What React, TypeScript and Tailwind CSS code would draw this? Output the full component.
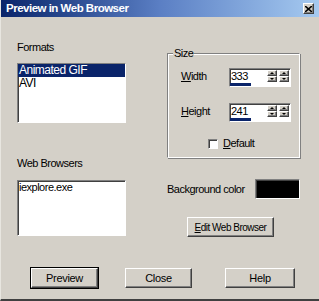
import React from "react";

const font = { fontFamily: '"Liberation Sans", Arial, sans-serif' };

const raised =
  "border border-t-white border-l-white border-r-[#404040] border-b-[#404040] shadow-[inset_-1px_-1px_0_#808080]";
const sunken =
  "border border-t-[#808080] border-l-[#808080] border-r-white border-b-white shadow-[inset_1px_1px_0_#404040]";

function Button({ label, w, def = false, className = "" }: { label: React.ReactNode; w: string; def?: boolean; className?: string }) {
  return (
    <div className={`${w} h-[20px] ${def ? "ring-1 ring-black" : ""} ${className}`}>
      <div className={`h-full w-full ${raised} bg-[#d4d0c8] flex items-center justify-center text-[11px] text-black whitespace-nowrap`}>
        {label}
      </div>
    </div>
  );
}

function Spin({ value }: { value: string }) {
  return (
    <div className={`w-[62px] h-[19px] ${sunken} bg-white flex flex-col`}>
      <div className="flex h-[14px] items-center">
        <span className="flex-1 pl-[1px] text-[11px] leading-none text-black">{value}</span>
        <div className="flex gap-[2px] pr-[1px]">
          {[0, 1].map((i) => (
            <div key={i} className="flex flex-col w-[10px]">
              <div className={`h-[6px] ${raised} bg-[#d4d0c8] flex items-center justify-center`}>
                <div className="w-0 h-0 border-l-[2px] border-r-[2px] border-b-[2px] border-l-transparent border-r-transparent border-b-black" />
              </div>
              <div className={`h-[6px] ${raised} bg-[#d4d0c8] flex items-center justify-center`}>
                <div className="w-0 h-0 border-l-[2px] border-r-[2px] border-t-[2px] border-l-transparent border-r-transparent border-t-black" />
              </div>
            </div>
          ))}
        </div>
      </div>
      <div className="h-[3px] flex">
        <div className="w-[21px] bg-[#0a246a]" />
      </div>
    </div>
  );
}

export default function App() {
  return (
    <div style={font} className="w-[319px] h-[301px] bg-[#d4d0c8] flex flex-col border-l border-l-[#e8e6e0] border-b-2 border-b-[#404040] overflow-hidden">
      {/* Title bar */}
      <div className="h-[17px] flex items-center justify-between bg-gradient-to-r from-[#0a246a] via-[#5b7fc4] to-[#a6caf0] pl-[5px] pr-[5px]">
        <span className="text-white font-bold text-[11.5px] tracking-[-0.5px] leading-none">
          Preview in Web Browser
        </span>
        <div className={`w-[11px] h-[11px] ${raised} bg-[#d4d0c8] flex items-center justify-center`}>
          <svg width="7" height="6" viewBox="0 0 7 6">
            <path d="M0 0 L7 6 M7 0 L0 6" stroke="black" strokeWidth="1.6" />
          </svg>
        </div>
      </div>

      {/* Body */}
      <div className="flex text-[11px] tracking-[-0.5px] text-black">
        {/* Left column */}
        <div className="ml-[16px] w-[109px] flex flex-col">
          <div className="mt-[24px] leading-[13px]">Formats</div>
          <div className={`mt-[9px] h-[60px] ${sunken} bg-white`}>
            <div className="bg-[#0a246a] text-white leading-[13px] pl-[1px] text-[12px]">Animated GIF</div>
            <div className="leading-[13px] pl-[1px] text-[12px]">AVI</div>
          </div>
          <div className="mt-[34px] leading-[13px]">Web Browsers</div>
          <div className={`mt-[10px] h-[56px] ${sunken} bg-white`}>
            <div className="leading-[13px] pl-[1px]">iexplore.exe</div>
          </div>
        </div>

        {/* Right column */}
        <div className="ml-[41px] w-[133px] flex flex-col">
          <div className="mt-[36px] h-[105px] border border-t-[#808080] border-l-[#808080] border-r-white border-b-white shadow-[inset_1px_1px_0_white,1px_1px_0_#808080] relative">
            <span className="absolute -top-[7px] left-[5px] bg-[#d4d0c8] px-[1px] leading-[13px]">Size</span>
            <div className="mt-[14px] flex items-start">
              <span className="ml-[13px] w-[48px] mt-[2px] leading-[13px]"><u>W</u>idth</span>
              <Spin value="333" />
            </div>
            <div className="mt-[16px] flex items-start">
              <span className="ml-[13px] w-[48px] mt-[2px] leading-[13px]"><u>H</u>eight</span>
              <Spin value="241" />
            </div>
            <div className="mt-[15px] ml-[40px] flex items-center">
              <div className={`w-[10px] h-[10px] ${sunken} bg-white`} />
              <span className="ml-[5px] leading-[13px]"><u>D</u>efault</span>
            </div>
          </div>
          <div className="mt-[21px] flex items-center justify-between">
            <span className="leading-[13px]">Background color</span>
            <div className={`w-[45px] h-[20px] ${sunken} bg-black`} />
          </div>
          <Button className="mt-[18px] ml-[20px]" w="w-[87px]" label={<span className="text-[10px]"><u>E</u>dit Web Browser</span>} />
        </div>
      </div>

      {/* Bottom buttons */}
      <div className="mt-[31px] flex tracking-[-0.3px]">
        <Button className="ml-[30px]" w="w-[67px]" def label="Preview" />
        <Button className="ml-[27px]" w="w-[67px]" label="Close" />
        <Button className="ml-[33px]" w="w-[70px]" label="Help" />
      </div>
    </div>
  );
}
